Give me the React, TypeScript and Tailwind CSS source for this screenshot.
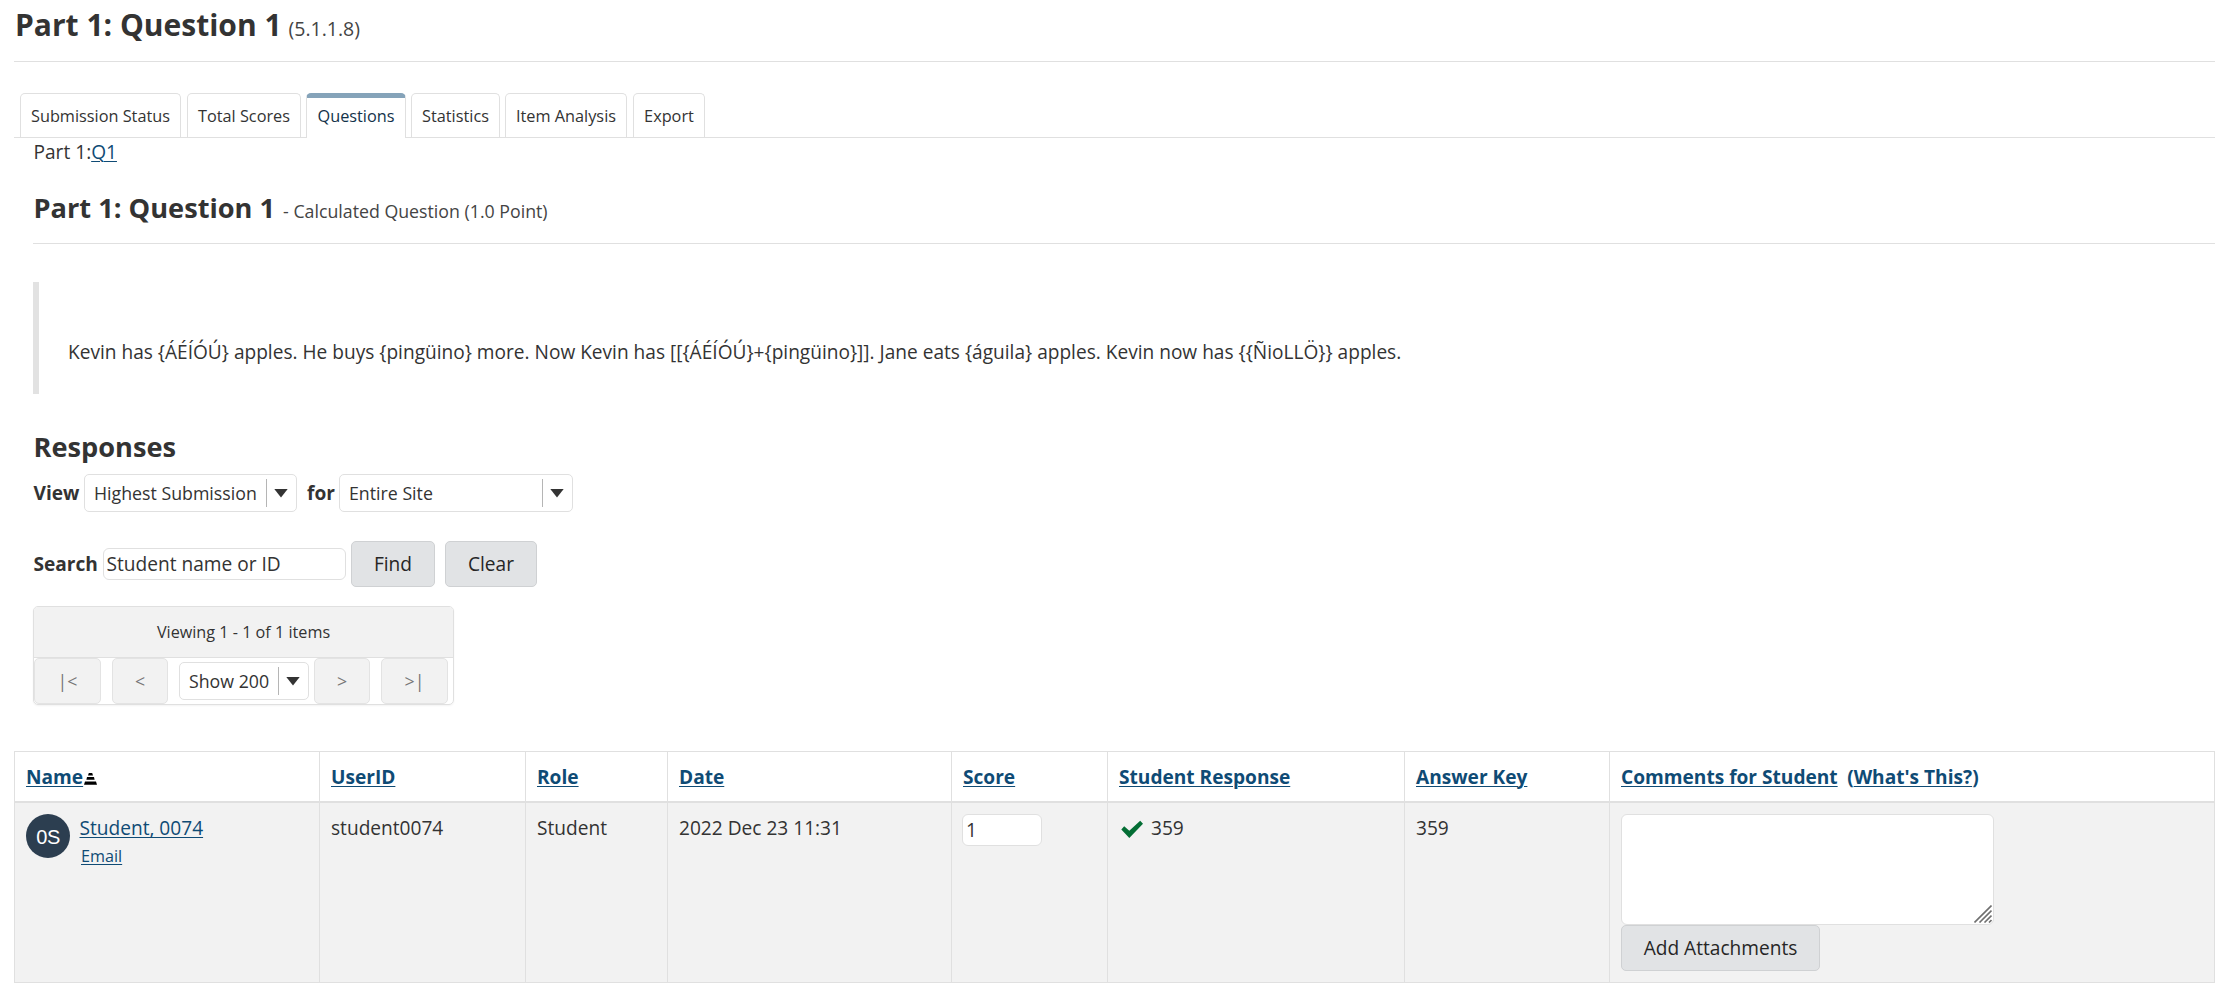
import type { ReactNode } from "react";

const tabs = [
  { label: "Submission Status", width: "w-[161px]" },
  { label: "Total Scores", width: "ml-[6px] w-[114px]" },
  { label: "Questions", width: "ml-[5px] w-[100px]", active: true },
  { label: "Statistics", width: "ml-[5px] w-[89px]" },
  { label: "Item Analysis", width: "ml-[5px] w-[122px]" },
  { label: "Export", width: "ml-[6px] w-[72px]" },
];

function Select({ label, box }: { label: string; box: string }) {
  return (
    <button className={`flex items-center rounded-[5px] border border-[#e0e0e0] bg-white pl-[9px] text-[17.75px] ${box}`}>
      <span className="flex-1 text-left whitespace-nowrap">{label}</span>
      <span className="h-[28px] w-px bg-[#b5b5b5]" />
      <svg className="mr-[8px] ml-[7px] h-[10px] w-[14px]" viewBox="0 0 14 10">
        <path d="M0.3 1H13.7L7 9.5Z" fill="#333" />
      </svg>
    </button>
  );
}

function Button({ children, box }: { children: ReactNode; box: string }) {
  return (
    <button className={`h-[46px] rounded-[5px] border border-[#cfd1d3] bg-[#e1e3e5] text-[#262626] ${box}`}>
      {children}
    </button>
  );
}

function PagerButton({ children, box }: { children: ReactNode; box: string }) {
  return (
    <button className={`h-[46px] rounded-[5px] border border-[#e3e3e3] bg-[#f2f2f2] text-[17.75px] text-[#777] ${box}`}>
      {children}
    </button>
  );
}

function Head({ children }: { children: ReactNode }) {
  return (
    <div className="flex h-[49px] items-center border-r border-[#e0e0e0] pl-[11px] font-bold whitespace-nowrap text-[#0f4b75]">
      {children}
    </div>
  );
}

function Cell({ children }: { children: ReactNode }) {
  return <div className="border-r border-[#e0e0e0] pl-[11px] whitespace-nowrap">{children}</div>;
}

const columns = "grid grid-cols-[305px_206px_142px_284px_156px_297px_205px_605px]";
const link = "underline decoration-1 underline-offset-2 text-[#0f4b75]";

export default function App() {
  return (
    <div className="min-h-[1000px] w-[2227px] overflow-hidden bg-white pr-[12px] pl-[14px] font-['Open_Sans',sans-serif] text-[19.13px] leading-[26px] text-[#333]">
      <h1 className="flex h-[62px] items-baseline border-b border-[#e0e0e0] pt-px pl-px text-[30px] leading-[48px] font-bold">
        Part 1: Question 1<span className="ml-[7px] text-[19.5px] font-normal text-[#444]">(5.1.1.8)</span>
      </h1>

      <nav className="mt-[31px] flex h-[45px] border-b border-[#e0e0e0] pl-[6px] text-[16.3px]">
        {tabs.map((t) => (
          <div
            key={t.label}
            className={
              t.active
                ? `flex h-[45px] items-center justify-center rounded-t-[5px] border-x border-t-[5px] border-x-[#e0e0e0] border-t-[#85a3b9] bg-white pb-[5px] whitespace-nowrap text-[#13324a] ${t.width}`
                : `flex h-[44px] items-center justify-center rounded-t-[5px] border-x border-t border-[#e0e0e0] whitespace-nowrap ${t.width}`
            }
          >
            {t.label}
          </div>
        ))}
      </nav>

      <main className="pl-[19px]">
        <div className="h-[27px] pt-px pl-[0.5px] leading-[27px]">
          Part 1:<a className={link}>Q1</a>
        </div>
        <h2 className="mt-[24px] flex h-[55px] items-baseline border-b border-[#e0e0e0] pt-px pl-[0.5px] text-[27.2px] leading-[36px] font-bold">
          Part 1: Question 1
          <span className="ml-[8px] text-[17.75px] font-normal text-[#444]">- Calculated Question (1.0 Point)</span>
        </h2>

        <blockquote className="mt-[38px] h-[112px] border-l-[6px] border-[#e2e2e2] pt-[57px] pl-[29px] text-[19.1px]">
          Kevin has {"{ÁÉÍÓÚ}"} apples. He buys {"{pingüino}"} more. Now Kevin has {"[[{ÁÉÍÓÚ}+{pingüino}]]"}. Jane eats{" "}
          {"{águila}"} apples. Kevin now has {"{{ÑioLLÖ}}"} apples.
        </blockquote>

        <h2 className="mt-[35px] pl-[0.5px] text-[27.2px] leading-[36px] font-bold">Responses</h2>
        <div className="mt-[9px] flex h-[38px] items-center">
          <b className="w-[51px] pl-[0.5px]">View</b>
          <Select label="Highest Submission" box="h-[38px] w-[213px]" />
          <b className="ml-[10px] w-[32px]">for</b>
          <Select label="Entire Site" box="h-[38px] w-[234px]" />
        </div>

        <div className="mt-[29px] flex h-[46px] items-center">
          <b className="w-[70px] pl-[0.5px]">Search</b>
          <input
            className="h-[32px] w-[243px] rounded-[6px] border border-[#e0e0e0] pl-[2.5px] placeholder:text-[#333] placeholder:opacity-100"
            placeholder="Student name or ID"
          />
          <Button box="ml-[5px] w-[84px]">Find</Button>
          <Button box="ml-[10px] w-[92px]">Clear</Button>
        </div>

        <div className="mt-[19px] h-[99px] w-[421px] rounded-[5px] border border-[#e0e0e0] shadow-xs">
          <div className="flex h-[51px] items-center justify-center rounded-t-[4px] border-b border-[#e0e0e0] bg-[#f2f2f2] text-[16.2px]">
            Viewing 1 - 1 of 1 items
          </div>
          <div className="flex h-[46px] items-center">
            <PagerButton box="w-[67px]">|&lt;</PagerButton>
            <PagerButton box="ml-[11px] w-[56px]">&lt;</PagerButton>
            <Select label="Show 200" box="ml-[11px] h-[38px] w-[130px]" />
            <PagerButton box="ml-[5px] w-[56px]">&gt;</PagerButton>
            <PagerButton box="ml-[11px] w-[67px]">&gt;|</PagerButton>
          </div>
        </div>
      </main>

      <section className="mt-[46px] w-[2201px] border-y border-l border-[#e0e0e0]">
        <div className={`${columns} border-b-2 border-[#e0e0e0]`}>
          <Head>
            <a className={link}>Name</a>
            <svg className="mt-[5px] ml-[1px] h-[12px] w-[13px] shrink-0" viewBox="0 0 13 12" fill="#000">
              <path d="M4.8 0H8.2L9 2.6H4ZM3 4H10L10.6 6.8H2.4ZM1 8.4H12L13 11.8H0Z" />
            </svg>
          </Head>
          <Head><a className={link}>UserID</a></Head>
          <Head><a className={link}>Role</a></Head>
          <Head><a className={link}>Date</a></Head>
          <Head><a className={link}>Score</a></Head>
          <Head><a className={link}>Student Response</a></Head>
          <Head><a className={link}>Answer Key</a></Head>
          <Head>
            <a className={link}>Comments for Student</a>
            <span className="ml-[9.5px]">(<a className={link}>What's This?</a>)</span>
          </Head>
        </div>
        <div className={`${columns} h-[179px] bg-[#f2f2f2]`}>
          <div className="flex border-r border-[#e0e0e0] pt-[11px] pl-[11px]">
            <div className="flex h-[44px] w-[44px] items-center justify-center rounded-full bg-[#2c3e50] pt-[2px] font-['Liberation_Sans',sans-serif] text-[20px] tracking-[-0.5px] text-white">
              0S
            </div>
            <div className="ml-[9.5px] pt-[1px]">
              <a className={`block ${link}`}>Student, 0074</a>
              <a className={`mt-[3px] ml-[1.5px] block text-[16.2px] leading-[24px] ${link}`}>Email</a>
            </div>
          </div>
          <Cell><div className="pt-[12px]">student0074</div></Cell>
          <Cell><div className="pt-[12px]">Student</div></Cell>
          <Cell><div className="pt-[12px]">2022 Dec 23 11:31</div></Cell>
          <Cell>
            <input className="mt-[11px] -ml-px block h-[32px] w-[80px] rounded-[6px] border border-[#e0e0e0] bg-white pl-[3px]" defaultValue="1" />
          </Cell>
          <Cell>
            <div className="flex pt-[12px]">
              <svg className="mt-[5px] mr-[8px] ml-[2px] h-[18px] w-[22px]" viewBox="0 0 22 18">
                <path d="M0.3 9.5 3.2 6.3 8.3 10.8 19.2 0.8 22 3.8 8.3 18Z" fill="#046e35" />
              </svg>
              359
            </div>
          </Cell>
          <Cell><div className="pt-[12px]">359</div></Cell>
          <Cell>
            <div className="relative mt-[11px] h-[111px] w-[373px]">
              <textarea className="block h-[111px] w-[373px] resize-none rounded-[6px] border border-[#e0e0e0] bg-white" />
              <svg className="absolute right-[2px] bottom-[2px] h-[18px] w-[18px]" viewBox="0 0 18 18" stroke="#707070" strokeWidth="1.6">
                <path d="M0.5 17.5L17.5 0.5M5.5 17.5L17.5 5.5M10.5 17.5L17.5 10.5M15 17.5L17.5 15" />
              </svg>
            </div>
            <Button box="block w-[199px]">Add Attachments</Button>
          </Cell>
        </div>
      </section>
    </div>
  );
}
